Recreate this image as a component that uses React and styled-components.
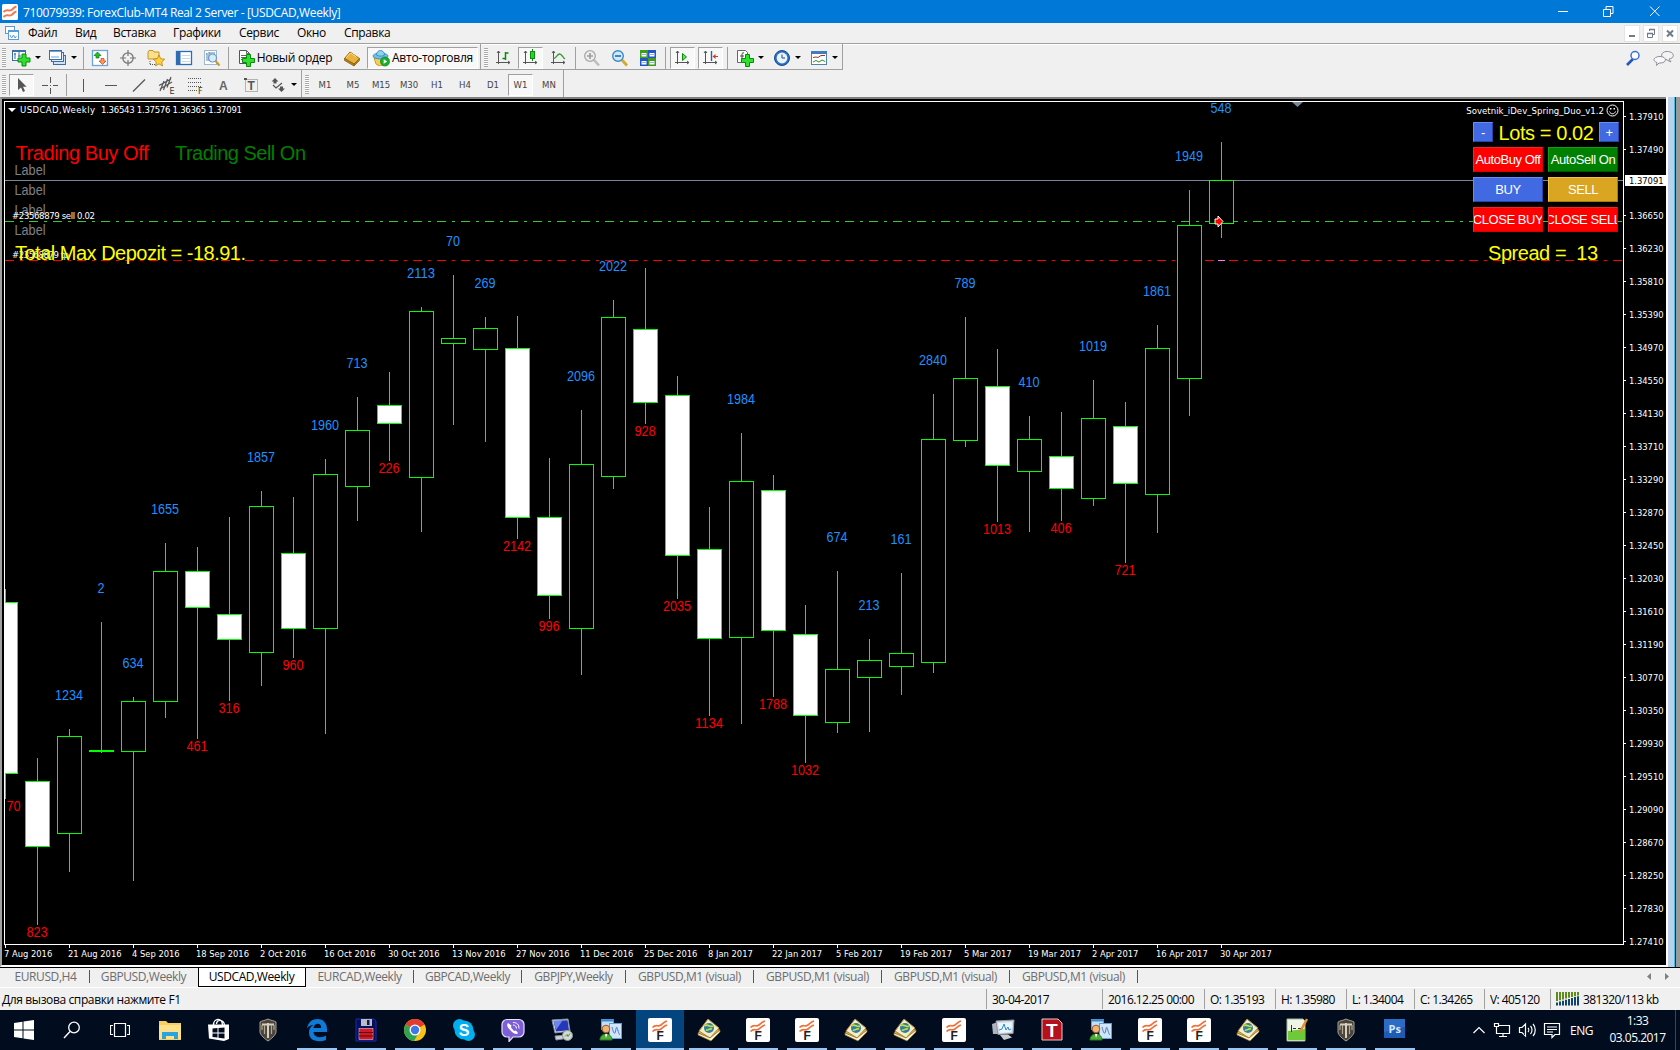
import React from 'react';
import styled, { createGlobalStyle, css } from 'styled-components';

const UI = `'Open Sans', 'Noto Sans', sans-serif`;
const SMALL = `'DejaVu Sans Condensed', 'DejaVu Sans', sans-serif`;
const ARIAL = `'Liberation Sans', Arial, sans-serif`;

const COLORS = {
  Face: '#f0f0f0',
  Edge: '#a0a0a0',
  Title: '#0078d7',
  Lime: '#00ff00',
  Dodger: '#1e90ff',
  Taskbar: '#010d1f',
  Underline: '#99c6f3',
};

// high, body top, body bottom, low, filled, label
const CANDLES = [
  [589, 602, 773, 799, 1, ''],
  [758, 781, 846, 925, 1, '823'],
  [729, 736, 833, 872, 0, '1234'],
  [622, 750, 751, 753, 0, '2'],
  [697, 701, 751, 881, 0, '634'],
  [543, 571, 701, 718, 0, '1655'],
  [547, 571, 607, 739, 1, '461'],
  [517, 614, 639, 701, 1, '316'],
  [491, 506, 652, 686, 0, '1857'],
  [497, 553, 628, 658, 1, '960'],
  [459, 474, 628, 734, 0, '1960'],
  [397, 430, 486, 521, 0, '713'],
  [372, 405, 423, 461, 1, '226'],
  [307, 311, 477, 532, 0, '2113'],
  [275, 338, 343, 425, 0, '70'],
  [317, 328, 349, 442, 0, '269'],
  [316, 348, 517, 539, 1, '2142'],
  [458, 517, 595, 619, 1, '996'],
  [410, 464, 628, 675, 0, '2096'],
  [300, 317, 476, 489, 0, '2022'],
  [268, 329, 402, 424, 1, '928'],
  [376, 395, 555, 599, 1, '2035'],
  [507, 549, 638, 716, 1, '1134'],
  [433, 481, 637, 724, 0, '1984'],
  [475, 490, 630, 697, 1, '1788'],
  [605, 634, 715, 763, 1, '1032'],
  [571, 669, 722, 733, 0, '674'],
  [639, 660, 677, 732, 0, '213'],
  [573, 653, 666, 695, 0, '161'],
  [394, 439, 662, 673, 0, '2840'],
  [317, 378, 440, 447, 0, '789'],
  [349, 386, 465, 522, 1, '1013'],
  [416, 439, 471, 532, 0, '410'],
  [412, 456, 488, 521, 1, '406'],
  [380, 418, 498, 506, 0, '1019'],
  [402, 426, 483, 563, 1, '721'],
  [325, 348, 494, 533, 0, '1861'],
  [190, 225, 378, 416, 0, '1949'],
  [142, 180, 223, 238, 0, '548'],
];

const DATES = [
  '7 Aug 2016', '21 Aug 2016', '4 Sep 2016', '18 Sep 2016', '2 Oct 2016',
  '16 Oct 2016', '30 Oct 2016', '13 Nov 2016', '27 Nov 2016', '11 Dec 2016',
  '25 Dec 2016', '8 Jan 2017', '22 Jan 2017', '5 Feb 2017', '19 Feb 2017',
  '5 Mar 2017', '19 Mar 2017', '2 Apr 2017', '16 Apr 2017', '30 Apr 2017',
];

const PRICES = Array.from({ length: 26 }, (_, k) => (1.3791 - k * 0.0042).toFixed(5));

const TABS = [
  ['EURUSD,H4', 88],
  ['GBPUSD,Weekly', 108],
  ['USDCAD,Weekly', 108],
  ['EURCAD,Weekly', 108],
  ['GBPCAD,Weekly', 108],
  ['GBPJPY,Weekly', 104],
  ['GBPUSD,M1 (visual)', 128],
  ['GBPUSD,M1 (visual)', 128],
  ['GBPUSD,M1 (visual)', 128],
  ['GBPUSD,M1 (visual)', 128],
];

const STATUS = [
  ['30-04-2017', 116],
  ['2016.12.25 00:00', 102],
  ['O: 1.35193', 71],
  ['H: 1.35980', 71],
  ['L: 1.34004', 68],
  ['C: 1.34265', 70],
  ['V: 405120', 66],
];

/* ---------- icons ---------- */

const Svg = ({ w = 18, h = 18, children, ...rest }) => (
  <svg width={w} height={h} viewBox={`0 0 ${w} ${h}`} fill="none" {...rest}>
    {children}
  </svg>
);

const Plus = ({ x, y }) => (
  <path
    d={`M${x + 4} ${y}h4v4h4v4h-4v4h-4v-4h-4v-4h4z`}
    fill="#2fe02f"
    stroke="#0a8a0a"
    strokeWidth="1"
  />
);

const Axes = () => <path d="M3.5 2v13M1 13.5h14M2 4l1.5-2L5 4M13 12l2 1.5-2 1.5" stroke="#555" />;

const ICONS = {
  newChart: (
    <Svg w={20}>
      <rect x="1.5" y="1.5" width="13" height="10" fill="#fff" stroke="#3a6ea5" />
      <path d="M4 4v6M3 5h2M8 3v5M7 7h3M1 2.5h14" stroke="#3a6ea5" />
      <Plus x={7} y={5} />
    </Svg>
  ),
  profiles: (
    <Svg w={19}>
      <rect x="5.5" y="6.5" width="12" height="9" fill="#cfe3f7" stroke="#3a6ea5" />
      <rect x="3.5" y="3.5" width="12" height="9" fill="#e2effb" stroke="#3a6ea5" />
      <rect x="1.5" y="1.5" width="12" height="9" fill="#fff" stroke="#3a6ea5" />
      <path d="M2 2.5h11M3 8h8" stroke="#6fa3d8" />
    </Svg>
  ),
  market: (
    <Svg>
      <rect x="1.5" y="1.5" width="15" height="15" fill="#fff" stroke="#6aa5dd" strokeWidth="1.3" />
      <path d="M6.500 3l3.500 3.500h-2v2.500h-3v-2.500h-2z" fill="#2db82d" stroke="#0b7a0b" strokeWidth=".7" />
      <path d="M11.500 15.500l3.500-3.500h-2v-2.500h-3v2.500h-2z" fill="#ff9a5a" stroke="#cc3c0c" strokeWidth=".7" />
    </Svg>
  ),
  target: (
    <Svg>
      <circle cx="9" cy="9" r="5.200" stroke="#777" strokeWidth="1.300" />
      <path d="M9 1v6M9 11v6M1 9h6M11 9h6" stroke="#777" strokeWidth="1.200" />
    </Svg>
  ),
  favorites: (
    <Svg w={20}>
      <path d="M2 3l1-1.500h4l1 1.500h5v7H2z" fill="#fbe08b" stroke="#c89320" />
      <path d="M4 12v4M4 15.500h5" stroke="#555" strokeDasharray="1 1" />
      <path d="M13 6l1.700 3.700 4 .5-3 2.700.8 4-3.500-2-3.500 2 .8-4-3-2.700 4-.5z" fill="#ffd23c" stroke="#b98310" strokeWidth=".8" />
    </Svg>
  ),
  terminal: (
    <Svg>
      <rect x="1.500" y="2.500" width="15" height="13" fill="#fff" stroke="#2f6bb3" strokeWidth="1.300" />
      <rect x="2" y="3" width="3.500" height="12" fill="#2f6bb3" />
      <path d="M7 6.500h8M7 9.500h8M7 12.500h8" stroke="#c4d8ee" />
    </Svg>
  ),
  tester: (
    <Svg>
      <rect x="1.500" y="1.500" width="12" height="14" fill="#fff" stroke="#9db8d4" />
      <path d="M4 4v8M3 5h1M6 3v9M6 4h4M11 3v4" stroke="#5b84ad" />
      <circle cx="9.500" cy="9" r="4" fill="#cfe6fa" fillOpacity=".8" stroke="#6a9ac8" strokeWidth="1.200" />
      <path d="M12.500 12l4 4.500" stroke="#c99a2b" strokeWidth="2.200" />
    </Svg>
  ),
  order: (
    <Svg>
      <path d="M2.500 1.500h7l3 3v10h-10z" fill="#fff" stroke="#555" />
      <path d="M9.500 1.500v3h3M4 6.500h6M4 8.500h6M4 10.500h4" stroke="#666" />
      <Plus x={5.500} y={5.500} />
    </Svg>
  ),
  book: (
    <Svg>
      <path d="M1.500 9.500L7 3l9.500 6.500L11 15z" fill="#e9b23c" stroke="#9a6a10" />
      <path d="M1.500 9.500v2L11 17v-2zM11 15v2l5.500-5.500v-2z" fill="#b87d18" stroke="#8c5e0c" strokeWidth=".7" />
      <path d="M3.500 8.500L7.500 4l6 4" stroke="#ffe08c" />
    </Svg>
  ),
  auto: (
    <Svg>
      <path d="M2 9h13l-2 6c-2 2-7 2-9 0z" fill="#f6cf55" stroke="#b98c1c" strokeWidth=".8" />
      <ellipse cx="8.500" cy="7" rx="7.500" ry="3" fill="#6fc0ea" stroke="#2d84b8" strokeWidth=".8" />
      <path d="M4.500 6c0-6 8-6 8 0-2 1.500-6 1.500-8 0z" fill="#8ed0f2" stroke="#2d84b8" strokeWidth=".8" />
      <circle cx="13" cy="12.500" r="4.500" fill="#16b32a" stroke="#0a7a18" strokeWidth=".7" />
      <path d="M11.700 10.200v4.600l3.500-2.300z" fill="#fff" />
    </Svg>
  ),
  bars: (
    <Svg>
      <Axes />
      <path d="M10.500 3v8M10.500 4h3M7.500 9.500h3" stroke="#0c8c0c" strokeWidth="1.500" />
    </Svg>
  ),
  candles: (
    <Svg>
      <Axes />
      <path d="M10.500 0v12" stroke="#0c8c0c" />
      <rect x="8.500" y="2.500" width="4" height="7" fill="#22d822" stroke="#0c8c0c" />
    </Svg>
  ),
  line: (
    <Svg>
      <Axes />
      <path d="M3 10c4-1 4-5 6.500-5S13 9 15 10" stroke="#2f9e2f" strokeWidth="1.300" />
    </Svg>
  ),
  zoomIn: (
    <Svg>
      <path d="M11 11l5 5.500" stroke="#bdbdbd" strokeWidth="2.600" />
      <circle cx="7" cy="7" r="5.300" fill="#eee" stroke="#a8a8a8" strokeWidth="1.300" />
      <path d="M7 4v6M4 7h6" stroke="#a0a0a0" strokeWidth="1.700" />
    </Svg>
  ),
  zoomOut: (
    <Svg>
      <path d="M11 11l5 5.500" stroke="#d6a928" strokeWidth="2.800" />
      <circle cx="7" cy="7" r="5.300" fill="#cfeafb" stroke="#3f87c8" strokeWidth="1.400" />
      <path d="M4 7h6" stroke="#2a73b8" strokeWidth="1.700" />
    </Svg>
  ),
  tile: (
    <Svg>
      <path d="M1 1h8v8H1zM9 9h8v8H9z" fill="#3f9c1c" />
      <path d="M9 1h8v8H9zM1 9h8v8H1z" fill="#2356c8" />
      <path d="M2.500 4h5v3.500h-5zM10.500 4h5v3.500h-5zM2.500 12h5v3.500h-5zM10.500 12h5v3.500h-5z" fill="#fff" />
      <path d="M3 5.500h4M11 5.500h4M3 13.500h4M11 13.500h4" stroke="#8fb8e0" />
    </Svg>
  ),
  scroll: (
    <Svg>
      <Axes />
      <path d="M8.500 4.500v7l4-3.500z" fill="#5ee05e" stroke="#0c8c0c" />
    </Svg>
  ),
  shift: (
    <Svg>
      <Axes />
      <path d="M9.500 2v10" stroke="#2a62a8" strokeWidth="1.400" />
      <path d="M10.500 7.500l3-2.500v5z" fill="#c8401c" />
      <path d="M13 7.500h3" stroke="#c8401c" />
    </Svg>
  ),
  indicators: (
    <Svg>
      <path d="M1.500 1.500h8l2 2v10h-10z" fill="#fff" stroke="#666" />
      <path d="M8 4c-2-1-2 1-2 2v5M4 7h4" stroke="#444" />
      <Plus x={5.500} y={5.500} />
    </Svg>
  ),
  clock: (
    <Svg>
      <circle cx="9" cy="9" r="7.500" fill="#2a6fc4" stroke="#174a90" />
      <circle cx="9" cy="9" r="5.400" fill="#e6f3ff" />
      <path d="M9 5.500V9h3" stroke="#345" />
    </Svg>
  ),
  template: (
    <Svg>
      <rect x="1.500" y="2.500" width="15" height="13" fill="#fff" stroke="#4f81b5" />
      <rect x="1" y="2" width="16" height="3" fill="#3f7cc0" />
      <path d="M3 8.500l3-.5 2 .5 3-2 4 0" stroke="#a8322a" />
      <path d="M3 13l3-1.500 3 1.500 3-2 3 1.500" stroke="#2b8f2b" />
    </Svg>
  ),
  cursor: (
    <Svg>
      <path d="M5 2v12l3-2.500 2 4.500 2-1-2-4.200h3.600z" fill="#555" />
    </Svg>
  ),
  cross: (
    <Svg>
      <path d="M9.500 1v6M9.500 12v6M1 9.500h6M12 9.500h5" stroke="#555" />
      <path d="M9 9.500h1" stroke="#555" />
    </Svg>
  ),
  vline: <Svg><path d="M9.500 3v13" stroke="#555" /></Svg>,
  hline: <Svg><path d="M3 9.500h12" stroke="#555" /></Svg>,
  trend: <Svg><path d="M3 15.500L15 3.500" stroke="#555" strokeWidth="1.200" /></Svg>,
  channel: (
    <Svg>
      <path d="M1 9.500L13 3M2 13L14 6M2 15L6 5M5.500 14L9.500 3M9 11.500L13 1" stroke="#555" strokeWidth="1.200" />
      <text x="11.500" y="18" fontSize="8" fontFamily="DejaVu Sans" fill="#333">E</text>
    </Svg>
  ),
  fibo: (
    <Svg>
      <path d="M2 2.500h14M2 6.500h14M2 10.500h14M2 14.500h9" stroke="#555" strokeDasharray="1 1" />
      <text x="12" y="18" fontSize="8" fontFamily="DejaVu Sans" fill="#333">F</text>
    </Svg>
  ),
  text: (
    <Svg>
      <text x="5" y="14" fontSize="12" fontWeight="bold" fontFamily="Liberation Sans" fill="#666">A</text>
    </Svg>
  ),
  label: (
    <Svg>
      <rect x="3.500" y="3.500" width="12" height="12" stroke="#777" strokeDasharray="1 1" />
      <text x="5.500" y="14" fontSize="12" fontWeight="bold" fontFamily="Liberation Sans" fill="#555">T</text>
      <path d="M2 2h3v2H2z" fill="#555" />
    </Svg>
  ),
  shapes: (
    <Svg>
      <path d="M6 2l3.500 3.500h-2v2h-3v-2h-2z" fill="#555" />
      <path d="M12.500 16l3.500-3.500h-2v-2h-3v2H9z" fill="#555" />
      <path d="M4 9l3 3 6-5" stroke="#555" strokeWidth="1.200" />
    </Svg>
  ),
};

const ForexIcon = () => (
  <Svg w={24} h={24}>
    <rect width="24" height="24" rx="2" fill="#fff" />
    <path d="M4.500 9.500c4-4 5 0 8.500-2.500s3-3 6-4M4.500 13.500c4-4 5 0 8.500-2.500s3-3 6-4" stroke="#f0703c" strokeWidth="1.700" />
    <text x="8.500" y="21.500" fontSize="12" fontWeight="bold" fontFamily="Liberation Sans" fill="#222">F</text>
  </Svg>
);

const EditorIcon = () => (
  <Svg w={24} h={24}>
    <path d="M1 15l9-12 13 9-9 10z" fill="#d9b45a" stroke="#7d5a14" />
    <path d="M2 13L11 1l11 9-9 10z" fill="#f5eccb" stroke="#a98535" />
    <path d="M1 15l12 5 10-8v2L14 23 1 17z" fill="#fff5cf" stroke="#8c6a1e" strokeWidth=".7" />
    <circle cx="12" cy="10" r="5" fill="#2f7f9e" />
    <path d="M8 8c2-3 5 2 8 0M9 12c2 1 3-2 6-1" stroke="#c7dd3c" strokeWidth="1.600" />
  </Svg>
);

const UsersIcon = () => (
  <Svg w={24} h={24}>
    <rect x="2.500" y="1.500" width="12" height="10" fill="#bfe0f8" stroke="#5fa0d8" />
    <path d="M2 2.500h13" stroke="#3c88d0" strokeWidth="2" />
    <rect x="10.500" y="5.500" width="12" height="15" fill="#cfe6fa" stroke="#5fa0d8" />
    <path d="M13 9c2 8 3 8 4 2s2 5 4 6" stroke="#4a74d0" />
    <circle cx="7" cy="11" r="3.800" fill="#f2b27a" stroke="#9c5a20" />
    <path d="M1 22c0-8 12-8 12 0z" fill="#4fae3a" stroke="#2c7a20" />
    <path d="M6 16l1 4 1.500-4z" fill="#fff" />
  </Svg>
);

const TanksIcon = () => (
  <Svg w={24} h={24}>
    <path d="M12 1c2.500 1.500 6 1.500 8 3v10c0 3-5 7-8 9-3-2-8-6-8-9V4c2-1.500 5.500-1.500 8-3z" fill="#4a443b" stroke="#a79f90" />
    <path d="M6 6.500h12M12 5v15" stroke="#d8d0bf" strokeWidth="2" />
    <path d="M8.500 7v9M15.500 7v9M6 7v5M18 7v5" stroke="#b0a896" strokeWidth="1.200" />
  </Svg>
);

const TASK_ICONS = {
  explorer: (
    <Svg w={24} h={24}>
      <path d="M1 3h7l2 2h13v17H1z" fill="#f7cf60" />
      <path d="M1 7h22v14H1z" fill="#fde08a" />
      <path d="M4 21v-7h16v7h-4v-3H8v3z" fill="#2ba3dd" />
    </Svg>
  ),
  store: (
    <Svg w={24} h={24}>
      <path d="M1 6.500h21V21L17 23 2 20.500z" fill="#fff" />
      <path d="M6.500 7c0-7 9-8 9 0M9.500 6c0-5 7-5 8 1" stroke="#fff" strokeWidth="1.400" />
      <path d="M5.500 10.500l5-.5v4.500h-5zM11.500 10l6-.6v5.100h-6zM5.500 15.500h5v4l-5-.4zM11.500 15.500h6v5l-6-.7z" fill="#010d1f" />
    </Svg>
  ),
  tanks: <TanksIcon />,
  edge: (
    <Svg w={24} h={24}>
      <path
        d="M2 10.500C3 4 7.500 1 12.500 1 19 1 22 6 22 11v3H8.500c.3 4 3.500 5.200 6.500 5.200 2.500 0 4.500-.7 6-1.700v4.200c-2 1.100-4.500 1.500-7 1.500C8 23.200 4 20 4 14.500 4 11 5.600 8.500 8.500 6.800 5.500 7.300 3.500 8.500 2 10.500zm6.500-.5h7.700c0-2.800-1.300-4.200-3.700-4.200-2.200 0-3.600 1.600-4 4.200z"
        fill="#0f7ad8"
      />
    </Svg>
  ),
  floppy: (
    <Svg w={24} h={24}>
      <path d="M2 1h18l2 2v20H2z" fill="#06105a" stroke="#1a28b0" />
      <rect x="7" y="1" width="11" height="7" fill="#b9bcc4" />
      <rect x="13" y="2" width="2.500" height="5" fill="#10184c" />
      <rect x="5" y="10.500" width="14" height="11" fill="#d01828" stroke="#e8c0c0" strokeWidth=".6" />
      <path d="M5 14.500h14M5 18h14" stroke="#5e0808" />
    </Svg>
  ),
  chrome: (
    <Svg w={24} h={24}>
      <circle cx="12" cy="12" r="11" fill="#fbc116" />
      <path d="M12 12L2.500 6.500A11 11 0 0 1 21.500 6.500z" fill="#e33b2e" />
      <path d="M12 12L2.500 6.500A11 11 0 0 0 11 23l4-7z" fill="#31a350" />
      <circle cx="12" cy="12" r="5.500" fill="#fff" />
      <circle cx="12" cy="12" r="4.200" fill="#3c78e8" />
    </Svg>
  ),
  skype: (
    <Svg w={24} h={24}>
      <circle cx="7.500" cy="7.500" r="6.500" fill="#00aff0" />
      <circle cx="16.500" cy="16.500" r="6.500" fill="#00aff0" />
      <circle cx="12" cy="12" r="9.500" fill="#00aff0" />
      <text x="6.700" y="17.700" fontSize="16" fontWeight="bold" fontFamily="Liberation Sans" fill="#fff">S</text>
    </Svg>
  ),
  viber: (
    <Svg w={24} h={24}>
      <path d="M6 1.500h12a5 5 0 0 1 5 5V14a5 5 0 0 1-5 5h-6l-4 4.500V19H6a5 5 0 0 1-5-5V6.500a5 5 0 0 1 5-5z" fill="#7d5fd8" stroke="#e8e0ff" strokeWidth="1.200" />
      <path d="M7 5c-2 2 0 5 3 8s6 4 7 2l-2-2.500-2 .5-3-3.500.500-2z" fill="#fff" />
      <path d="M12 4.500c4 0 6 2 6 6M12 7c2 0 3.500 1.500 3.500 3.500" stroke="#fff" />
    </Svg>
  ),
  pc: (
    <Svg w={24} h={24}>
      <path d="M2 2l16-1 2 12-15 2z" fill="#d8dce6" stroke="#8a90a0" />
      <path d="M3.500 3l14-.8 1.500 10L6 13.500z" fill="#2437b8" />
      <path d="M3.500 3l9-.5L6 12z" fill="#6c86ee" />
      <path d="M5 18l13-1 1 3-13 2z" fill="#cfd3da" stroke="#8a90a0" />
      <circle cx="17.500" cy="17.500" r="5" fill="#d4d8d4" stroke="#8d948d" />
      <path d="M15 18.500l2-2 1 2 2-3" stroke="#2fa02f" />
    </Svg>
  ),
  users: <UsersIcon />,
  forex: <ForexIcon />,
  editor: <EditorIcon />,
  monitor: (
    <Svg w={24} h={24}>
      <path d="M1 6l6-2v12H2z" fill="#aeb4bc" />
      <path d="M5 3l18-1-1 13.500-15 1z" fill="#d3d8de" stroke="#8d96a1" />
      <path d="M7 5l14-.8-.8 9.800L8.500 15z" fill="#eaf6ff" />
      <path d="M8 12l3-1 2-5 2 6 2-3 1 3 2-1" stroke="#2a8ad0" />
      <path d="M9 17l8-.5 4 3L13 22z" fill="#c8cdd3" />
    </Svg>
  ),
  tred: (
    <Svg w={24} h={24}>
      <path d="M2 1h16l4 4v17H2z" fill="#b5101c" stroke="#e8c8c8" />
      <text x="6" y="18.500" fontSize="19" fontWeight="bold" fontFamily="Liberation Sans" fill="#fff">T</text>
    </Svg>
  ),
  notes: (
    <Svg w={24} h={24}>
      <path d="M2 1h16l2 2v20H2z" fill="#eef5e4" stroke="#a8b89a" />
      <path d="M3 13l17-2v11H3z" fill="#6fca3a" />
      <path d="M6.500 7v7M8 10.500h3M13 10.500h3" stroke="#333" />
      <path d="M22 1l-7 13" stroke="#e6912c" strokeWidth="2.500" />
    </Svg>
  ),
  ps: (
    <Svg w={24} h={24}>
      <rect x="1" y="1" width="21" height="19" fill="#1e5cb3" />
      <path d="M1 1h21v8L1 14z" fill="#2d6cc4" />
      <text x="5.500" y="14.500" fontSize="11" fontWeight="bold" fontFamily="Open Sans" fill="#d6e8ff">Ps</text>
    </Svg>
  ),
};

const TASKS = [
  'explorer', 'store', 'tanks', 'edge', 'floppy', 'chrome', 'skype', 'viber', 'pc',
  'users', 'forex', 'editor', 'forex', 'forex', 'editor', 'editor', 'forex',
  'monitor', 'tred', 'users', 'forex', 'forex', 'editor', 'notes', 'tanks', 'ps',
];

/* ---------- sections ---------- */

function TitleBar() {
  return (
    <Title>
      <Svg w={16} h={16}>
        <rect width="16" height="16" rx="1.500" fill="#fff" />
        <path d="M1.500 8c4-4 5 0 8-2s2-3 5-3.500M1.500 13c4-4 5 0 8-2s2-3 5-3.500" stroke="#ee7a52" strokeWidth="2" />
      </Svg>
      <TitleText>710079939: ForexClub-MT4 Real 2 Server - [USDCAD,Weekly]</TitleText>
      <WindowButtons>
        <Svg w={46} h={20}><path d="M17 9.500h10" stroke="#fff" /></Svg>
        <Svg w={45} h={20}>
          <path d="M16.500 7.500h7v7h-7zM19 7V4.500h7v7H24" stroke="#fff" />
        </Svg>
        <Svg w={46} h={20}><path d="M18 4.500l9.500 9.500M27.500 4.500L18 14" stroke="#fff" /></Svg>
      </WindowButtons>
    </Title>
  );
}

function MenuBar() {
  return (
    <Menu>
      <Svg w={15} h={15}>
        <rect x=".5" y=".5" width="9" height="7" fill="#fff" stroke="#5b9bd5" />
        <rect x="3.500" y="4.500" width="10" height="9" fill="#fff" stroke="#5b9bd5" />
        <path d="M3 5.500h11M5 9l1.500 3 2-3 1.500 3 1.500-2" stroke="#5b9bd5" />
      </Svg>
      <MenuItem $w={47}>Файл</MenuItem>
      <MenuItem $w={38}>Вид</MenuItem>
      <MenuItem $w={60}>Вставка</MenuItem>
      <MenuItem $w={66}>Графики</MenuItem>
      <MenuItem $w={58}>Сервис</MenuItem>
      <MenuItem $w={47}>Окно</MenuItem>
      <MenuItem $w={64}>Справка</MenuItem>
      <ChildButtons>
        <ChildButton><Svg w={15} h={15}><path d="M4 10h6" stroke="#6d7c8c" strokeWidth="2" /></Svg></ChildButton>
        <ChildButton>
          <Svg w={15} h={15}>
            <path d="M3.500 7.500h5v4h-5zM5.500 5V3.500h5v5H9" stroke="#6d7c8c" />
            <path d="M3 7.500h6M5 3.500h6" stroke="#6d7c8c" strokeWidth="1.500" />
          </Svg>
        </ChildButton>
        <ChildButton><Svg w={15} h={15}><path d="M4 4.500l6 6M10 4.500l-6 6" stroke="#6d7c8c" strokeWidth="2" /></Svg></ChildButton>
      </ChildButtons>
    </Menu>
  );
}

const Drop = ({ icon, w }) => (
  <Tool $w={w}>
    {ICONS[icon]}
    <Caret />
  </Tool>
);

function Toolbars() {
  return (
    <Bars>
      <BarRow>
        <Bar>
          <Grip />
          <Drop icon="newChart" w={36} />
          <Drop icon="profiles" w={37} />
          <Sep />
          {['market', 'target', 'favorites', 'terminal', 'tester'].map((n) => (
            <Tool key={n}>{ICONS[n]}</Tool>
          ))}
          <Sep />
          <Tool $w={107}>{ICONS.order}<ToolText>Новый ордер</ToolText></Tool>
          <Tool>{ICONS.book}</Tool>
          <Tool $w={111} $on>{ICONS.auto}<ToolText>Авто-торговля</ToolText></Tool>
        </Bar>
        <Bar>
          <Grip />
          <Tool $w={27}>{ICONS.bars}</Tool>
          <Tool $w={25} $on>{ICONS.candles}</Tool>
          <Tool>{ICONS.line}</Tool>
          <Sep />
          <Tool>{ICONS.zoomIn}</Tool>
          <Tool>{ICONS.zoomOut}</Tool>
          <Tool>{ICONS.tile}</Tool>
          <Sep $pad={3} />
          <Tool $w={25} $on>{ICONS.scroll}</Tool>
          <Tool $w={25} $on>{ICONS.shift}</Tool>
          <Sep />
          <Drop icon="indicators" w={39} />
          <Drop icon="clock" w={36} />
          <Drop icon="template" w={37} />
        </Bar>
        <BarTail>
          <Svg w={16} h={16}>
            <path d="M8 9L2 15" stroke="#2456c0" strokeWidth="2.600" />
            <circle cx="10" cy="5.500" r="4" fill="#fff" stroke="#3a6fd8" strokeWidth="1.500" />
          </Svg>
          <Svg w={22} h={16}>
            <path d="M14 1.500c8 0 8 7 2 7.500l2 3-5-2.500c-6-1-6-8 1-8z" fill="#f4f4f4" stroke="#8d8d98" />
            <path d="M7 6.500c7 0 7 6 1 6.500H6l-2.500 2.500.5-3C-1 11 .5 6.500 7 6.500z" fill="#fafafa" stroke="#8d8d98" />
          </Svg>
        </BarTail>
      </BarRow>
      <BarRow>
        <Bar>
          <Grip />
          <Tool $w={25} $on>{ICONS.cursor}</Tool>
          <Tool>{ICONS.cross}</Tool>
          <Sep />
          {['vline', 'hline', 'trend', 'channel', 'fibo', 'text', 'label'].map((n) => (
            <Tool key={n}>{ICONS[n]}</Tool>
          ))}
          <Drop icon="shapes" w={36} />
        </Bar>
        <Bar>
          <Grip />
          {['M1', 'M5', 'M15', 'M30', 'H1', 'H4', 'D1', 'W1', 'MN'].map((n) => (
            <Period key={n} $w={n === 'W1' ? 25 : 28} $on={n === 'W1'}>{n}</Period>
          ))}
        </Bar>
      </BarRow>
    </Bars>
  );
}

function Candle({ index, data }) {
  const [high, top, bottom, low, filled, label] = data;
  const x = 5 + index * 32;
  return (
    <g>
      <path d={`M${x + 0.5} ${high}V${top}M${x + 0.5} ${bottom}V${low}`} stroke={COLORS.Lime} />
      <rect
        x={x - 11.5}
        y={top + 0.5}
        width="24"
        height={bottom - top}
        fill={filled ? '#fff' : '#000'}
        stroke={COLORS.Lime}
      />
      <text
        x={x}
        y={filled ? low + 12 : high - 29}
        textAnchor="middle"
        textLength={label.length * 7}
        lengthAdjust="spacingAndGlyphs"
        fill={filled ? '#ff0000' : COLORS.Dodger}
      >
        {label}
      </text>
    </g>
  );
}

function Plot() {
  return (
    <PlotFrame>
      <svg width="1618" height="842" viewBox="5 102 1618 842" fontFamily={ARIAL} fontSize="14">
        <path d="M5 180.500h1618" stroke="#778899" />
        <path d="M5 221.500h1618" stroke="#32cd32" strokeDasharray="9 6 3 6" />
        <path d="M5 260.500h1618" stroke="#ff0000" strokeDasharray="9 6 3 6" />
        <path d="M1292 102h11l-5.500 5z" fill="#778899" />
        {CANDLES.map((c, i) => <Candle key={i} index={i} data={c} />)}
        <text x="6.500" y="811" fill="#ff0000" textLength="14" lengthAdjust="spacingAndGlyphs">70</text>
        <path d="M1218 260.500h7" stroke="#ee82ee" />
        <path d="M1215 219h3v-3l5 5.500-5 5.500v-3h-3z" fill="#f00" stroke="#fff" />

        <path d="M8 108h8l-4 4z" fill="#fff" />
        <g fill="#fff" fontFamily={SMALL} fontSize="9.500">
          <text x="20" y="113" textLength="75">USDCAD,Weekly</text>
          <text x="101" y="113" textLength="141">1.36543 1.37576 1.36365 1.37091</text>
        </g>
        <g fontSize="20">
          <text x="15.500" y="160" fill="#ff0000" textLength="133">Trading Buy Off</text>
          <text x="175" y="160" fill="#008000" textLength="131">Trading Sell On</text>
        </g>
        <g fill="#808080">
          {[175, 195, 215, 235].map((y) => (
            <text key={y} x="14.500" y={y} textLength="31" lengthAdjust="spacingAndGlyphs">Label</text>
          ))}
        </g>
        <g fill="#fff" fontFamily={SMALL} fontSize="9.500">
          <text x="12" y="219" textLength="83">#23568879 sell 0.02</text>
          <text x="12" y="258" textLength="57">#23568879 tp</text>
        </g>
        <text x="15" y="260" fontSize="20" fill="#ffff00" textLength="231">Total Max Depozit = -18.91.</text>
      </svg>
      <Panel>
        <Expert>
          Sovetnik_iDev_Spring_Duo_v1.2
          <Svg w={13} h={13}>
            <circle cx="6.500" cy="6.500" r="5.500" stroke="#fff" />
            <path d="M3.500 7.500c1 3 5 3 6 0" stroke="#fff" />
            <path d="M4 4h1.500v1.500H4zM7.500 4H9v1.500H7.500z" fill="#fff" />
          </Svg>
        </Expert>
        <LotsRow>
          <PanelButton $tone="blue" $small>-</PanelButton>
          <Yellow>Lots = 0.02</Yellow>
          <PanelButton $tone="blue" $small>+</PanelButton>
        </LotsRow>
        <ButtonGrid>
          <PanelButton $tone="red">AutoBuy Off</PanelButton>
          <PanelButton $tone="green">AutoSell On</PanelButton>
          <PanelButton $tone="blue">BUY</PanelButton>
          <PanelButton $tone="gold">SELL</PanelButton>
          <PanelButton $tone="red">CLOSE BUY</PanelButton>
          <PanelButton $tone="red">CLOSE SELL</PanelButton>
        </ButtonGrid>
        <Spread>Spread =&nbsp; 13</Spread>
      </Panel>
    </PlotFrame>
  );
}

function Workspace() {
  return (
    <Work>
      <Chart>
        <Plot />
        <PriceScale>
          {PRICES.map((p, k) => (
            <Price key={p} $hidden={k === 2}>{p}</Price>
          ))}
          <CurrentPrice>1.37091</CurrentPrice>
        </PriceScale>
        <DateScale>
          {DATES.map((d) => <DateMark key={d}>{d}</DateMark>)}
        </DateScale>
      </Chart>
      <RightEdge />
    </Work>
  );
}

function Footer() {
  return (
    <>
      <TabBar>
        {TABS.map(([name, w], i) => (
          <ChartTab key={i} $w={w} $active={i === 2} $bare={i === 1}>{name}</ChartTab>
        ))}
        <TabArrows w={30} h={12}>
          <path d="M8 2v7L4 5.500zM22 2v7l4-3.500z" fill="#808080" />
        </TabArrows>
      </TabBar>
      <StatusBar>
        <Hint>Для вызова справки нажмите F1</Hint>
        {STATUS.map(([s, w]) => <StatusCell key={s} $w={w}>{s}</StatusCell>)}
        <StatusCell $w={130}>
          <Svg w={24} h={14}>
            {Array.from({ length: 8 }, (_, i) => (
              <React.Fragment key={i}>
                <path d={`M${i * 3 + 1} 0v${9 - i * 0.8}`} stroke="#5f8a1c" strokeWidth="2" />
                <path d={`M${i * 3 + 1} ${10.5 - i * 0.9}V13.500`} stroke="#10456e" strokeWidth="2" />
              </React.Fragment>
            ))}
          </Svg>
          <Traffic>381320/113 kb</Traffic>
        </StatusCell>
      </StatusBar>
    </>
  );
}

function Taskbar() {
  return (
    <Tasks>
      <SysButton>
        <Svg w={20} h={20}>
          <path d="M0 3l8.500-1.200V9.500H0zM9.500 1.600L20 0v9.500H9.500zM0 10.500h8.500v7.700L0 17zM9.500 10.500H20V20L9.500 18.400z" fill="#fff" />
        </Svg>
      </SysButton>
      <SysButton>
        <Svg w={18} h={18}>
          <circle cx="11" cy="6.500" r="5.300" stroke="#fff" strokeWidth="1.300" />
          <path d="M7 10.500L1 17" stroke="#fff" strokeWidth="1.400" />
        </Svg>
      </SysButton>
      <SysButton>
        <Svg w={20} h={16}>
          <path d="M4.500 1.500h11v13h-11zM3 3.500H.5v9H3M17 3.500h2.500v9H17" stroke="#fff" strokeWidth="1.200" />
        </Svg>
      </SysButton>
      <TaskList>
        {TASKS.map((t, i) => (
          <Task key={i} $open={i > 2} $active={i === 10}>{TASK_ICONS[t]}</Task>
        ))}
      </TaskList>
      <Tray>
        <Svg w={14} h={10}><path d="M1.500 8L7 2.500 12.500 8" stroke="#fff" strokeWidth="1.200" /></Svg>
        <Svg w={18} h={16}>
          <path d="M5 3.500h11.500v8H3.500V8M10 11.500V14M6 14.500h8M1.500 1.500h4v3h-4zM3.500 5v3" stroke="#fff" strokeWidth="1.200" />
        </Svg>
        <Svg w={18} h={16}>
          <path d="M1.500 5.500H4l3.500-3.500v12L4 10.500H1.500zM10 6c1 1 1 3 0 4M12.500 4c2 2 2 6 0 8M15 2c3 3 3 9 0 12" stroke="#fff" strokeWidth="1.200" />
        </Svg>
        <Svg w={18} h={17}>
          <path d="M1.500 1.500h15v11H12L9 15.500v-3H1.500zM4 5h10M4 7.500h10M4 10h6" stroke="#fff" strokeWidth="1.200" />
        </Svg>
        <Lang>ENG</Lang>
        <Clock>
          <span>1:33</span>
          <span>03.05.2017</span>
        </Clock>
      </Tray>
    </Tasks>
  );
}

export default function App() {
  return (
    <>
      <GlobalStyle />
      <Screen>
        <TitleBar />
        <MenuBar />
        <Toolbars />
        <Workspace />
        <Footer />
        <Taskbar />
      </Screen>
    </>
  );
}

/* ---------- styles ---------- */

const GlobalStyle = createGlobalStyle`
  * { box-sizing: border-box; }
  body { margin: 0; overflow: hidden; }
  svg { display: block; flex: none; }
  svg text { white-space: pre; }
`;

const Screen = styled.div`
  display: flex;
  flex-direction: column;
  width: 1680px;
  height: 1050px;
  overflow: hidden;
  background: ${COLORS.Face};
  font-family: ${UI};
  font-size: 12px;
  color: #000;
  white-space: nowrap;
`;

const Title = styled.header`
  display: flex;
  align-items: center;
  height: 23px;
  padding-left: 2px;
  background: ${COLORS.Title};
  color: #fff;
`;

const TitleText = styled.span`
  margin-left: 5px;
  padding-top: 1px;
  letter-spacing: -0.36px;
`;

const WindowButtons = styled.div`
  display: flex;
  margin-left: auto;
  margin-right: 2px;
`;

const Menu = styled.nav`
  display: flex;
  align-items: center;
  height: 20px;
  padding-left: 5px;
`;

const MenuItem = styled.span`
  width: ${(p) => p.$w}px;
  padding-left: 8px;
  letter-spacing: -0.35px;
  line-height: 18px;
`;

const ChildButtons = styled.div`
  display: flex;
  gap: 3px;
  margin-left: auto;
  margin-right: 2px;
`;

const ChildButton = styled.div`
  width: 16px;
  height: 17px;
  background: #fff;
  border: 1px solid #e4e4e4;
`;

const Bars = styled.div`
  height: 54px;
`;

const BarRow = styled.div`
  display: flex;
  height: 27px;

  &:first-child {
    border-top: 1px solid ${COLORS.Edge};
    box-shadow: inset 0 1px #fff;
  }
`;

const Bar = styled.div`
  display: flex;
  align-items: center;
  padding-top: 2px;
  border-right: 1px solid ${COLORS.Edge};

  ${BarRow}:first-child & {
    border-bottom: 1px solid ${COLORS.Edge};
  }

  & + & {
    padding-left: 1px;
  }
`;

const Grip = styled.div`
  width: 4px;
  height: 19px;
  margin: 0 2px;
  background: repeating-linear-gradient(#a8a8a8 0 1px, #fff 1px 2px);
`;

const Tool = styled.div`
  display: flex;
  align-items: center;
  justify-content: center;
  width: ${(p) => p.$w || 28}px;
  height: 22px;

  ${(p) => p.$on && css`
    margin: 0 2px 0 1px;
    background: #f8f8f8;
    border: 1px solid #fff;
    border-top-color: ${COLORS.Edge};
    border-left-color: ${COLORS.Edge};
  `}
`;

const ToolText = styled.span`
  margin-left: 2px;
  letter-spacing: -0.25px;
`;

const Period = styled(Tool)`
  font-family: ${SMALL};
  font-size: 9.5px;
  color: #444;
`;

const Caret = styled.i`
  margin-left: 4px;
  border: 3px solid transparent;
  border-top-color: #000;
  border-bottom: 0;
`;

const Sep = styled.div`
  width: 1px;
  height: 22px;
  margin: 0 ${(p) => p.$pad || 2}px;
  background: ${COLORS.Edge};
`;

const BarTail = styled.div`
  display: flex;
  align-items: center;
  gap: 12px;
  margin-left: auto;
  padding: 1px 5px 0 0;
`;

const Work = styled.main`
  display: flex;
  height: 871px;
  background: #000;
  border-bottom: 1px solid #000;
`;

const Chart = styled.section`
  display: grid;
  grid-template-columns: 1620px 42px;
  grid-template-rows: 844px 21px;
  width: 1666px;
  height: 870px;
  padding: 2px 0 0 2px;
  background: #000;
  border-top: 2px solid #808080;
  border-left: 2px solid ${COLORS.Edge};
  border-bottom: 2px solid #fff;
`;

const PlotFrame = styled.div`
  position: relative;
  border: 1px solid #fff;
`;

const Panel = styled.div`
  position: absolute;
  top: 0;
  right: 4px;
  display: flex;
  flex-direction: column;
  width: 153px;
  color: #fff;
`;

const Expert = styled.div`
  display: flex;
  align-items: center;
  justify-content: flex-end;
  gap: 2px;
  height: 20px;
  padding-bottom: 3px;
  font-family: ${SMALL};
  font-size: 9.5px;
  letter-spacing: 0.03px;
`;

const LotsRow = styled.div`
  display: flex;
  justify-content: space-between;
  align-items: center;
  width: 146px;
  height: 20px;
  margin-left: 7px;
`;

const Yellow = styled.span`
  font-family: ${ARIAL};
  font-size: 20px;
  letter-spacing: -0.4px;
  color: #ffff00;
  padding-top: 2px;
`;

const ButtonGrid = styled.div`
  display: grid;
  grid-template-columns: 70px 70px;
  grid-auto-rows: 25px;
  gap: 5px;
  margin: 5px 0 0 7px;
`;

const TONES = {
  blue: ['#4169e1', '#6a8cf8', '#2746ac'],
  red: ['#ff0000', '#ff2020', '#d80000'],
  green: ['#008000', '#10a010', '#005800'],
  gold: ['#daa520', '#f4c440', '#a87c10'],
};

const PanelButton = styled.button`
  display: flex;
  align-items: center;
  justify-content: center;
  width: ${(p) => (p.$small ? 20 : 70)}px;
  height: ${(p) => (p.$small ? 20 : 25)}px;
  padding: 0;
  overflow: hidden;
  color: #fff;
  font-family: ${ARIAL};
  font-size: 13px;
  letter-spacing: -0.45px;
  white-space: nowrap;
  background: ${(p) => TONES[p.$tone][0]};
  border: 1px solid;
  border-color: ${({ $tone }) => {
    const [, light, dark] = TONES[$tone];
    return `${light} ${dark} ${dark} ${light}`;
  }};
`;

const Spread = styled(Yellow)`
  margin: 8px 0 0 22px;
  letter-spacing: -0.45px;
`;

const PriceScale = styled.div`
  position: relative;
  height: 866px;
  margin-top: -1px;
  font-family: ${SMALL};
  font-size: 9.3px;
  color: #fff;
`;

const Price = styled.div`
  display: flex;
  align-items: center;
  height: 33px;
  visibility: ${(p) => (p.$hidden ? 'hidden' : 'visible')};

  &::before {
    content: '';
    width: 2px;
    height: 1px;
    margin-right: 3px;
    background: #fff;
  }
`;

const CurrentPrice = styled.div`
  position: absolute;
  top: 75px;
  left: 1px;
  width: 41px;
  height: 11px;
  padding-left: 4px;
  line-height: 11px;
  color: #000;
  background: #fff;
`;

const DateScale = styled.div`
  display: grid;
  grid-template-columns: repeat(20, 64px);
  font-family: ${SMALL};
  font-size: 9.3px;
  color: #fff;
`;

const DateMark = styled.span`
  line-height: 11px;

  &::before {
    content: '';
    display: block;
    width: 1px;
    height: 3px;
    margin-left: 1px;
    background: #fff;
  }
`;

const RightEdge = styled.div`
  flex: 1;
  background: linear-gradient(
    90deg,
    #fff 0 2px,
    #b9d1ea 2px 8px,
    #35c4e8 8px 9px,
    #222 9px 10px,
    #9a9a9a 10px
  );
`;

const TabBar = styled.div`
  display: flex;
  height: 20px;
  padding-left: 2px;
  border-bottom: 1px solid #fff;
`;

const ChartTab = styled.div`
  display: flex;
  justify-content: center;
  position: relative;
  width: ${(p) => p.$w}px;
  height: 18px;
  padding-right: 1px;
  line-height: 17px;
  color: ${(p) => (p.$active ? '#000' : '#6d6d6d')};
  letter-spacing: -0.42px;

  &::after {
    content: '';
    position: absolute;
    right: 0;
    top: 2px;
    width: 1px;
    height: 13px;
    background: ${(p) => (p.$active || p.$bare ? 'transparent' : '#555')};
  }

  ${(p) => p.$active && css`
    background: #fff;
    border: solid #000;
    border-width: 0 1px 1px;
    height: 19px;
  `}
`;

const TabArrows = styled(Svg)`
  margin: 3px 7px 0 auto;
`;

const StatusBar = styled.div`
  display: flex;
  height: 22px;
  align-items: center;
`;

const Hint = styled.span`
  flex: 1;
  padding-left: 2px;
  letter-spacing: -0.38px;
`;

const StatusCell = styled.div`
  display: flex;
  align-items: center;
  width: ${(p) => p.$w}px;
  height: 20px;
  padding-left: 5px;
  border-left: 1px solid ${COLORS.Edge};
  letter-spacing: -0.56px;
`;

const Traffic = styled.span`
  margin-left: 3px;
`;

const Tasks = styled.footer`
  display: flex;
  height: 40px;
  background: ${COLORS.Taskbar};
  color: #fff;
`;

const SysButton = styled.div`
  display: flex;
  align-items: center;
  justify-content: center;
  width: 48px;
  height: 40px;
`;

const TaskList = styled.div`
  display: flex;
  gap: 1px;
  padding-left: 2px;
`;

const Task = styled.div`
  display: flex;
  flex-direction: column;
  align-items: center;
  justify-content: space-between;
  width: 48px;
  height: 40px;
  padding-top: 8px;
  background: ${(p) => (p.$active ? '#04457f' : 'transparent')};

  &::after {
    content: '';
    width: ${(p) => (p.$active ? 48 : 40)}px;
    height: 2px;
    background: ${(p) => (p.$open ? COLORS.Underline : 'transparent')};
  }
`;

const Tray = styled.div`
  display: flex;
  align-items: center;
  gap: 7px;
  margin-left: auto;
`;

const Lang = styled.span`
  margin-left: 2px;
  letter-spacing: -0.5px;
`;

const Clock = styled.div`
  display: flex;
  flex-direction: column;
  align-items: center;
  justify-content: center;
  width: 76px;
  height: 40px;
  margin-right: 4px;
  padding-bottom: 2px;
  line-height: 17px;
  letter-spacing: -0.5px;
  border-right: 1px solid #3a4656;
`;
